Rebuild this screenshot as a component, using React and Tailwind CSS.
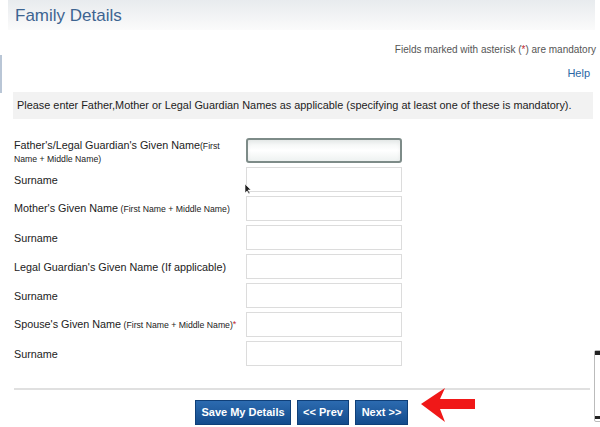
import React from "react";

const rows = [
  { label: "Father's/Legal Guardian's Given Name", note: "(First Name + Middle Name)", wrap: true, focused: true },
  { label: "Surname" },
  { label: "Mother's Given Name", note: " (First Name + Middle Name)" },
  { label: "Surname" },
  { label: "Legal Guardian's Given Name (If applicable)" },
  { label: "Surname" },
  { label: "Spouse's Given Name", note: " (First Name + Middle Name)", required: true },
  { label: "Surname" },
];

function FieldRow({ row }) {
  return (
    <div className="flex items-center h-[29px]">
      <div className="w-[232px] text-[10.8px] leading-[12px] text-[#222]">
        {row.wrap ? (
          <div className="w-[215px] leading-[12px] pt-[2px]">
            {row.label}
            <span className="text-[8.7px]">{row.note}</span>
          </div>
        ) : (
          <div className="whitespace-nowrap">
            {row.label}
            {row.note && <span className="text-[8.7px]">{row.note}</span>}
            {row.required && <span className="text-[#c0282d] text-[9px] align-top">*</span>}
          </div>
        )}
      </div>
      <input
        type="text"
        className={
          row.focused
            ? "w-[156px] h-[25px] rounded-[3px] border-2 border-[#7d8b88] bg-gradient-to-b from-[#eef2f1] via-[#ffffff] to-[#eef2f1] shadow-inner outline-none"
            : "w-[156px] h-[25px] border border-[#dcdcdc] bg-white outline-none"
        }
      />
    </div>
  );
}

export default function App() {
  return (
    <div className="w-[600px] h-[427px] bg-white relative overflow-hidden font-['Liberation_Sans',Arial,sans-serif]">
      <div className="absolute left-0 top-[55px] w-[2px] h-[38px] bg-[#b9c6d6]"></div>

      <div className="ml-[8px] mr-[5px] h-[30px] bg-gradient-to-b from-[#e8ebee] to-[#fbfbfb] px-[7px] pt-[3px] text-[17px] text-[#3d6491]">
        Family Details
      </div>

      <div className="mt-[13px] pr-[4px] text-right text-[10px] leading-[14px] text-[#555]">
        Fields marked with asterisk (<span className="text-[#c0282d]">*</span>) are mandatory
      </div>
      <div className="mt-[9px] pr-[10px] text-right text-[11px] leading-[14px] text-[#2b67a6]">
        Help
      </div>

      <div className="mt-[12px] ml-[13px] mr-[7px] h-[27px] bg-[#f2f2f2] flex items-center pl-[4px] text-[10.9px] text-[#222] whitespace-nowrap">
        Please enter Father,Mother or Legal Guardian Names as applicable (specifying at least one of these is mandatory).
      </div>

      <div className="mt-[17px] ml-[14px] flex flex-col">
        {rows.map((row, i) => (
          <FieldRow key={i} row={row} />
        ))}
      </div>

      <div className="mt-[20px] ml-[14px] mr-[10px] h-[2px] bg-[#e0e0e0]"></div>

      <div className="mt-[10px] ml-[195px] flex items-center gap-[6px]">
        <button className="h-[25px] w-[96px] bg-gradient-to-b from-[#2c6bb0] to-[#134b8c] text-white text-[11px] font-bold border border-[#0f3f78]">
          Save My Details
        </button>
        <button className="h-[25px] w-[52px] bg-gradient-to-b from-[#2c6bb0] to-[#134b8c] text-white text-[11px] font-bold border border-[#0f3f78]">
          &lt;&lt; Prev
        </button>
        <button className="h-[25px] w-[53px] bg-gradient-to-b from-[#2c6bb0] to-[#134b8c] text-white text-[11px] font-bold border border-[#0f3f78]">
          Next &gt;&gt;
        </button>
      </div>

      <svg className="absolute left-[419px] top-[386px]" width="58" height="38" viewBox="0 0 58 38">
        <path d="M2 18 L26 2 L21 13 L56 13 L56 23 L21 23 L26 36 Z" fill="#f01818" />
      </svg>

      <svg className="absolute left-[244px] top-[183px]" width="8" height="12" viewBox="0 0 8 12">
        <path d="M1 1 L1 10 L3 8 L5 11 L6 10 L4 7 L7 7 Z" fill="#222" stroke="#fff" strokeWidth="0.6" />
      </svg>

      <div className="absolute left-[594px] top-[350px] w-[10px] h-[72px] border border-[#bbb] bg-white rounded-[2px] flex flex-col justify-between">
        <div className="h-[4px] bg-[#222]"></div>
        <div className="h-[3px] bg-[#222] mb-[2px]"></div>
      </div>
    </div>
  );
}
